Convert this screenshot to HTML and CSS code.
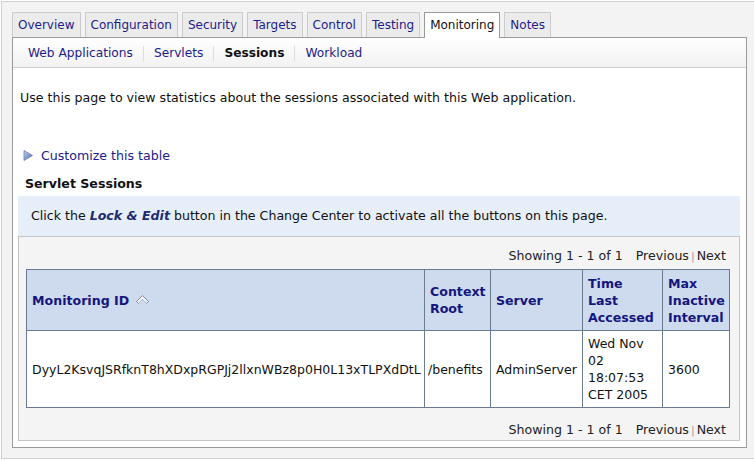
FILE: index.html
```html
<!DOCTYPE html>
<html>
<head>
<meta charset="utf-8">
<link rel="stylesheet" href="styles.css">
</head>
<body>
<div class="frame">
  <div class="tabs">
    <span class="tab">Overview</span>
    <span class="tab">Configuration</span>
    <span class="tab">Security</span>
    <span class="tab">Targets</span>
    <span class="tab">Control</span>
    <span class="tab">Testing</span>
    <span class="tab active">Monitoring</span>
    <span class="tab">Notes</span>
  </div>
  <div class="panel">
    <div class="subtabs">
      <span class="sub">Web Applications</span>
      <span class="sub">Servlets</span>
      <span class="sub current">Sessions</span>
      <span class="sub">Workload</span>
    </div>
    <div class="content">
      <p class="intro">Use this page to view statistics about the sessions associated with this Web application.</p>
      <div class="customize">
        <svg class="tri" width="10" height="11" viewBox="0 0 10 11">
          <defs>
            <linearGradient id="tg" x1="0" y1="0" x2="1" y2="1">
              <stop offset="0" stop-color="#c4d2ea"/>
              <stop offset="1" stop-color="#4a67a8"/>
            </linearGradient>
          </defs>
          <polygon points="1,0.5 9.5,5.5 1,10.5" fill="url(#tg)" stroke="#6680b8" stroke-width="0.8"/>
        </svg>
        <span class="link">Customize this table</span>
      </div>
      <div class="title">Servlet Sessions</div>
      <div class="info">Click the <b><i>Lock &amp; Edit</i></b> button in the Change Center to activate all the buttons on this page.</div>
      <div class="tablebox">
        <div class="pager top">Showing 1 - 1 of 1 <span class="pl">Previous</span><span class="bar">|</span>Next</div>
        <table class="grid">
          <colgroup>
            <col class="c1"><col class="c2"><col class="c3"><col class="c4"><col class="c5">
          </colgroup>
          <thead>
            <tr>
              <th>Monitoring ID <svg class="sort" width="13" height="11" viewBox="0 0 13 11"><polygon points="0.5,6.5 6.5,0.5 12.5,6.5 10.5,8.5 6.5,4.5 2.5,8.5" fill="#eef2f7" stroke="#7f8b9c" stroke-width="1"/><polyline points="2.5,8.5 6.5,4.5 10.5,8.5" fill="none" stroke="#aab5c4" stroke-width="1"/></svg></th>
              <th>Context<br>Root</th>
              <th>Server</th>
              <th>Time<br>Last<br>Accessed</th>
              <th>Max<br>Inactive<br>Interval</th>
            </tr>
          </thead>
          <tbody>
            <tr>
              <td>DyyL2KsvqJSRfknT8hXDxpRGPJj2llxnWBz8p0H0L13xTLPXdDtL</td>
              <td>/benefits</td>
              <td>AdminServer</td>
              <td>Wed Nov<br>02<br>18:07:53<br>CET 2005</td>
              <td>3600</td>
            </tr>
          </tbody>
        </table>
        <div class="pager bottom">Showing 1 - 1 of 1 <span class="pl">Previous</span><span class="bar">|</span>Next</div>
      </div>
    </div>
  </div>
</div>
</body>
</html>
```
FILE: styles.css
```css
html, body {
  margin: 0;
  padding: 0;
  background: #ffffff;
}
body {
  width: 754px;
  height: 460px;
  overflow: hidden;
  font-family: "DejaVu Sans", "Liberation Sans", sans-serif;
  font-size: 12.6px;
  color: #111;
}
.frame {
  margin: 1px 0 0 1px;
  width: 735px;
  padding: 10px 7px 10px 10px;
  border: 1px solid #cfcfcf;
  border-right: none;
  background: #f3f3f3;
}
.tabs {
  display: flex;
  gap: 4px;
  align-items: flex-end;
  height: 25px;
  position: relative;
  z-index: 1;
  font-size: 12px;
}
.tab {
  display: block;
  height: 23px;
  line-height: 22px;
  padding: 1px 5px 0;
  border: 1px solid #cccccc;
  border-bottom: none;
  background: #ebebeb;
  color: #1c1c8a;
}
.tab.active {
  height: 24px;
  background: #ffffff;
  border-color: #9a9a9a;
  color: #111;
  margin-bottom: -1px;
}
.panel {
  border: 1px solid #9a9a9a;
  background: #ffffff;
}
.subtabs {
  display: flex;
  align-items: center;
  height: 30px;
  padding-top: 2px;
  box-sizing: border-box;
  border-bottom: 1px solid #cfcfcf;
  background: linear-gradient(#ffffff, #f2f2f2);
  padding-left: 5px;
  font-size: 12.2px;
}
.sub {
  padding: 0 10px;
  line-height: 15px;
  color: #1c1c8a;
  border-left: 1px solid #dcdcdc;
}
.sub:first-child {
  border-left: none;
}
.sub.current {
  font-weight: bold;
  color: #111;
}
.content {
  padding: 21px 6px 6px 5px;
}
.intro {
  margin: 0 0 41px 2px;
  line-height: 17px;
}
.customize {
  display: flex;
  align-items: center;
  gap: 8px;
  margin-left: 5px;
  height: 17px;
}
.tri {
  display: block;
}
.link {
  color: #1c1c8a;
}
.title {
  margin: 11px 0 4px 7px;
  font-weight: bold;
  line-height: 17px;
}
.info {
  background: #e6eefa;
  height: 40px;
  line-height: 40px;
  padding-left: 13px;
}
.info b {
  color: #1c2c6e;
}
.tablebox {
  border: 1px solid #c4c4c4;
  background: #f4f4f4;
  padding: 0 7px;
}
.pager {
  text-align: right;
  line-height: 17px;
  color: #222;
  padding-right: 6px;
}
.pager.top {
  padding-top: 10px;
  padding-bottom: 4px;
}
.pager.bottom {
  padding-top: 13px;
  padding-bottom: 1px;
}
.pl {
  margin-left: 9px;
}
.bar {
  color: #999;
  margin: 0 2px;
  font-size: 11px;
}
.grid {
  width: 703px;
  table-layout: fixed;
  border-collapse: collapse;
  background: #ffffff;
}
.c1 { width: 398px; }
.c2 { width: 66px; }
.c3 { width: 92px; }
.c4 { width: 80px; }
.c5 { width: 67px; }
.grid th, .grid td {
  border: 1px solid #6a7a90;
  padding: 4px 2px 4px 5px;
  line-height: 17px;
  text-align: left;
  vertical-align: middle;
  white-space: nowrap;
}
.grid th {
  background: #cedbef;
  color: #15157e;
  font-weight: bold;
  height: 52px;
}
.grid td {
  height: 68px;
  color: #111;
  font-size: 12.5px;
}
.grid td:first-child {
  padding-left: 5px;
}
.grid td:nth-child(2) {
  padding-left: 3px;
}
.sort {
  vertical-align: -1px;
  margin-left: 2px;
}
```
